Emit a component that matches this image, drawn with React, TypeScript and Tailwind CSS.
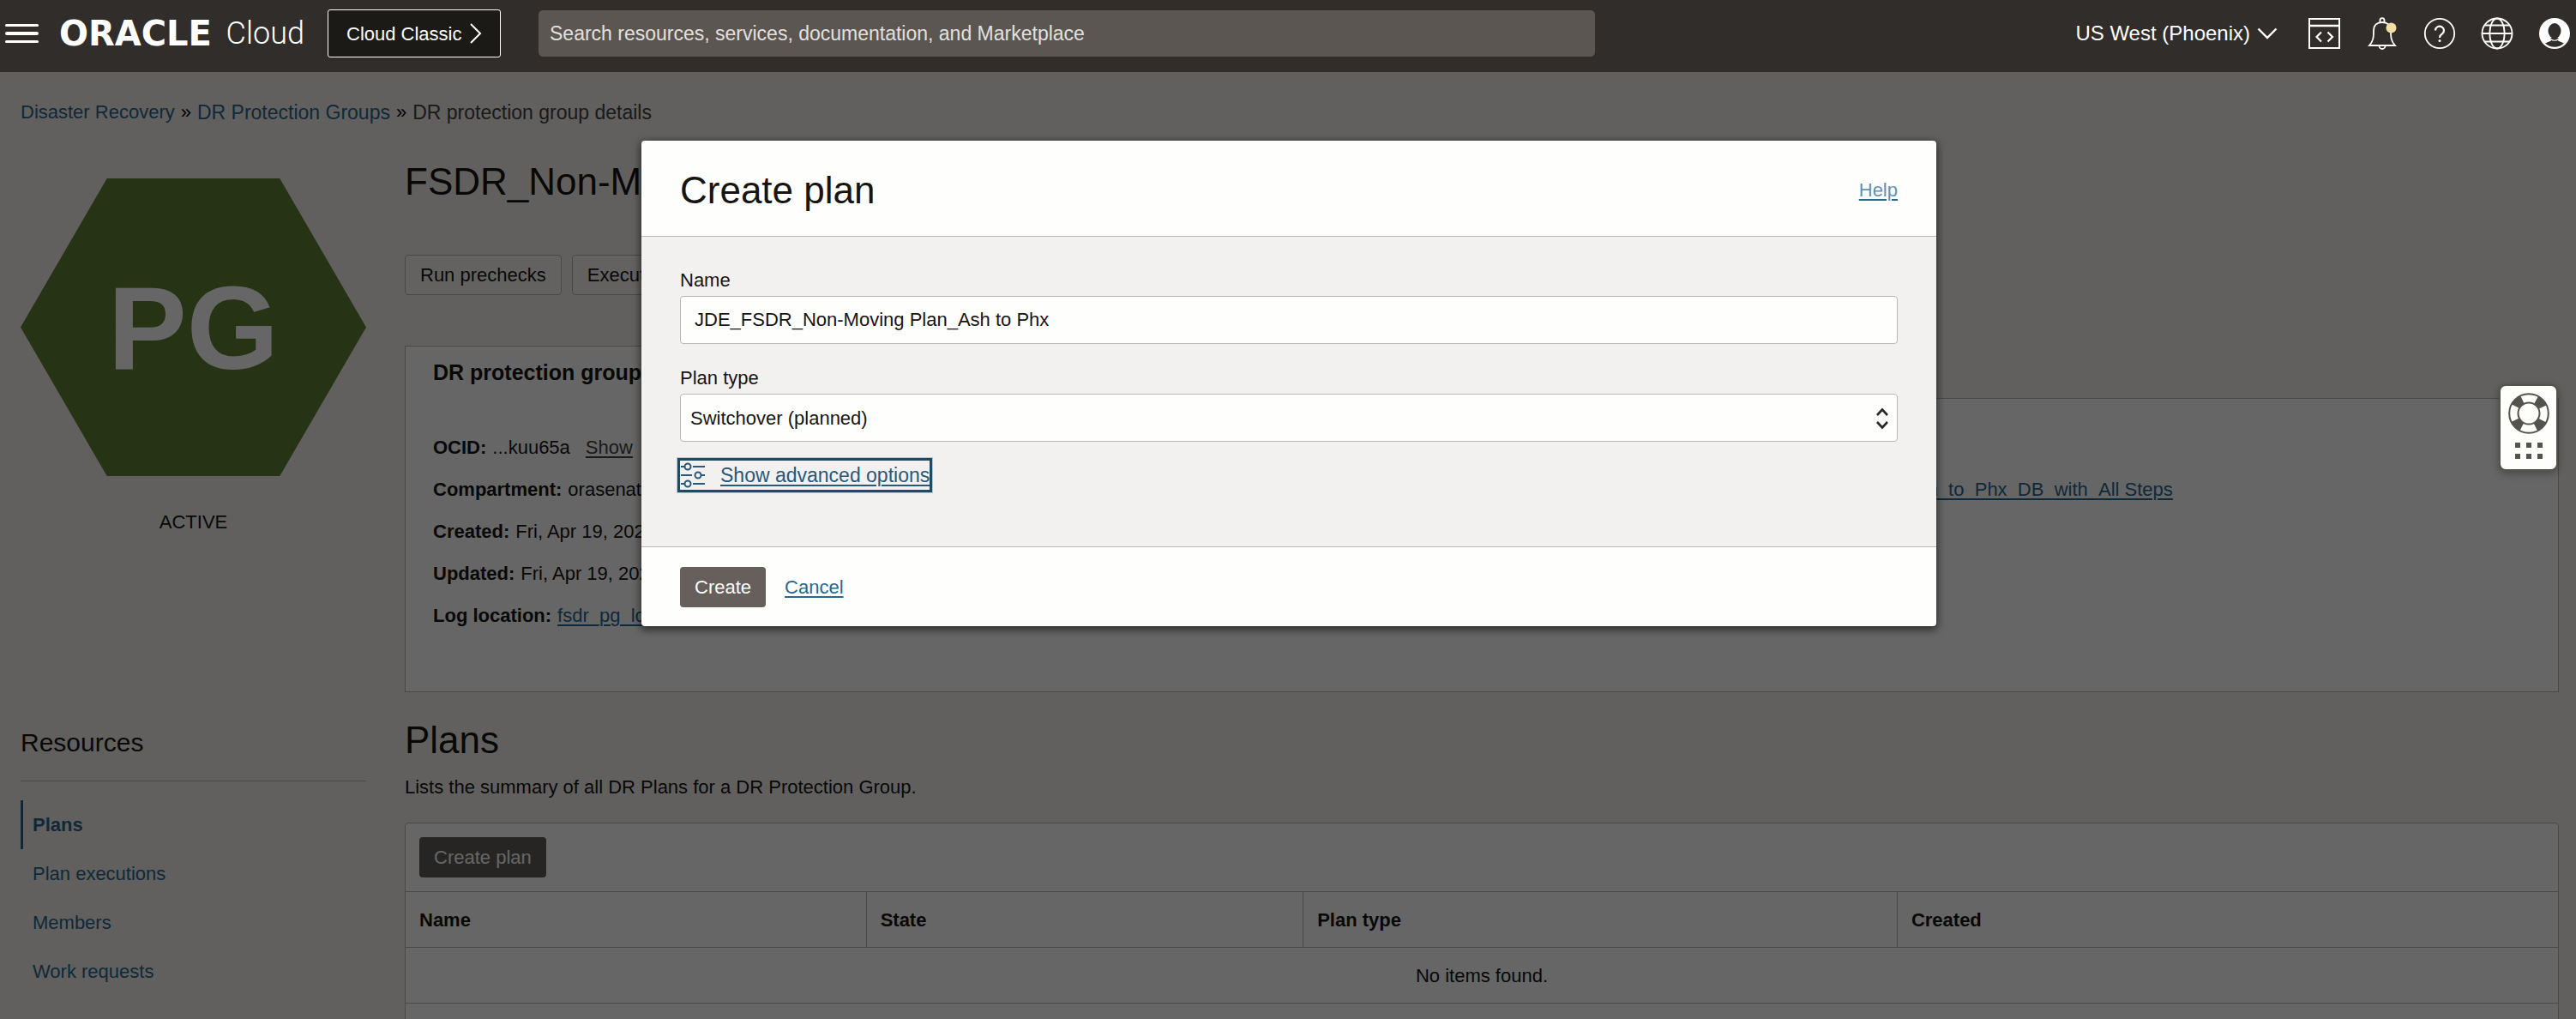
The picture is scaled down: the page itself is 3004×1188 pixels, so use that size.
import React, { useState } from "react";

const detailsLeft = [
  { label: "OCID:", value: "...kuu65a", action: "Show" },
  { label: "Compartment:", value: "orasenat" },
  { label: "Created:", value: "Fri, Apr 19, 2024" },
  { label: "Updated:", value: "Fri, Apr 19, 2024" },
];

const resources = ["Plans", "Plan executions", "Members", "Work requests"];

function CodeIcon() {
  return (
    <svg width="38" height="38" viewBox="0 0 38 38" fill="none" stroke="currentColor" strokeWidth="2">
      <rect x="1" y="2" width="35" height="34" />
      <path d="M1 10H36" strokeWidth="2.4" />
      <path d="M15 17.5L9.5 23L15 28.5M22.500 17.5L28 23L22.500 28.5" strokeWidth="2.2" />
    </svg>
  );
}

function BellIcon() {
  return (
    <svg width="38" height="38" viewBox="0 0 38 38" fill="none" stroke="currentColor" strokeWidth="1.8">
      <path d="M16.5 6V3.6a2.5 2.5 0 0 1 5 0V6" />
      <path d="M4 33H34C29.500 28 29 24 29 16C29 9 25 6 19 6S9 9 9 16C9 24 8.500 28 4 33Z" />
      <path d="M15.500 33.500a3.500 3.500 0 0 0 7 0" />
      <circle cx="29.500" cy="12.500" r="6" fill="#f3dfa6" stroke="none" />
    </svg>
  );
}

function HelpIcon() {
  return (
    <svg width="38" height="38" viewBox="0 0 38 38" fill="none" stroke="currentColor" strokeWidth="1.8">
      <circle cx="19" cy="19" r="17.200" />
      <path d="M14 15.500a5 4.800 0 1 1 8 3.800C20 20.700 19 21.500 19 24" strokeWidth="2.200" />
      <circle cx="19" cy="27.500" r="1.500" fill="currentColor" stroke="none" />
    </svg>
  );
}

function GlobeIcon() {
  return (
    <svg width="38" height="38" viewBox="0 0 38 38" fill="none" stroke="currentColor" strokeWidth="1.900">
      <circle cx="19" cy="19" r="17.500" />
      <ellipse cx="19" cy="19" rx="8.700" ry="17.500" />
      <path d="M1.500 19H36.500M5 9.500H33M5 28.500H33" />
    </svg>
  );
}

function UserIcon() {
  return (
    <svg width="38" height="38" viewBox="0 0 38 38">
      <circle cx="19" cy="19" r="18" fill="#fff" />
      <ellipse cx="19" cy="16" rx="7.500" ry="9" fill="#312d2a" />
      <path d="M14.500 24L15 27.500L8 30.500A16.500 16.500 0 0 0 30 30.500L23 27.500L23.500 24Z" fill="#312d2a" />
      <path d="M14.500 25.500Q19 29 23.500 25.500" stroke="#fff" strokeWidth="1.200" fill="none" />
    </svg>
  );
}

function SlidersIcon() {
  return (
    <svg width="30" height="30" viewBox="0 0 30 30" fill="none" stroke="currentColor" strokeWidth="2">
      <circle cx="9" cy="5" r="3.500" />
      <circle cx="21" cy="15" r="3.500" />
      <circle cx="9" cy="25" r="3.500" />
      <path d="M1 5H5.500M15 5H29M1 15H14M24.500 15H29M1 25H5.500M15 25H29" />
    </svg>
  );
}

function LifebuoyIcon() {
  return (
    <svg width="48" height="48" viewBox="0 0 48 48" fill="none" stroke="#55534e">
      <circle cx="24" cy="24" r="18" strokeWidth="10" strokeDasharray="11.310 16.964" strokeDashoffset="-8.482" />
      <circle cx="24" cy="24" r="22.800" strokeWidth="2" />
      <circle cx="24" cy="24" r="12.500" strokeWidth="2" />
    </svg>
  );
}

function Header() {
  return (
    <header className="relative z-20 flex h-[84px] items-center bg-[#312d2a] pb-[6px] text-[22px] text-white">
      <button aria-label="Open navigation menu" className="ml-1.5 flex w-[39px] flex-col gap-[6px]">
        <span className="h-[3px] rounded-sm bg-white" />
        <span className="h-[4px] rounded-sm bg-white" />
        <span className="h-[3px] rounded-sm bg-white" />
      </button>
      <a href="#home" className="ml-6 flex w-[286px] items-center justify-between leading-10">
        <span className="font-['DejaVu_Sans'] text-[40px] font-bold">ORACLE</span>
        <span className="font-['Roboto'] text-[36px] font-light">Cloud</span>
      </a>
      <button className="ml-[27px] flex h-[56px] w-[202px] items-center justify-between rounded-[3px] border border-white bg-[#1b1a16] px-[21px] whitespace-nowrap">
        Cloud Classic
        <svg width="14" height="24" viewBox="0 0 14 24" fill="none" stroke="currentColor" strokeWidth="2">
          <path d="M1 1L12 12L1 23" />
        </svg>
      </button>
      <input
        type="search"
        aria-label="Search"
        placeholder="Search resources, services, documentation, and Marketplace"
        className="ml-11 h-[54px] w-[41%] rounded-[5px] bg-[#5b5652] px-[13px] text-[23px] placeholder:text-[#e2e0de] placeholder:opacity-100"
      />
      <nav aria-label="Account" className="mr-1.5 ml-auto flex items-center gap-[29px]">
        <button className="mr-[7px] flex items-center gap-2 text-[24px] whitespace-nowrap">
          US West (Phoenix)
          <svg width="24" height="14" viewBox="0 0 24 14" fill="none" stroke="currentColor" strokeWidth="2.400">
            <path d="M1.500 1.500L12 12L22.500 1.500" />
          </svg>
        </button>
        <button aria-label="Developer tools"><CodeIcon /></button>
        <button aria-label="Announcements"><BellIcon /></button>
        <button aria-label="Help menu"><HelpIcon /></button>
        <button aria-label="Language"><GlobeIcon /></button>
        <button aria-label="Profile"><UserIcon /></button>
      </nav>
    </header>
  );
}

function Details() {
  return (
    <section className="flex gap-[45px]">
      <div className="flex w-[403px] shrink-0 flex-col items-center pt-[37px]">
        <div className="flex h-[347px] w-full items-center justify-center bg-[#5f8032] text-[138px] leading-none font-bold text-white [clip-path:polygon(25%_0,75%_0,100%_50%,75%_100%,25%_100%,0_50%)]">
          PG
        </div>
        <p className="mt-10 leading-7">ACTIVE</p>
      </div>
      <div className="min-w-0 flex-1">
        <h1 className="mt-[17px] text-[44px] leading-12">FSDR_Non-Moving</h1>
        <div className="mt-[61px] flex gap-3">
          {["Run prechecks", "Execute plan"].map((t) => (
            <button key={t} className="h-[47px] rounded-[4px] border border-[#b9b6b4] bg-[#f7f5f2] px-[17px] whitespace-nowrap">
              {t}
            </button>
          ))}
        </div>
        <div className="mt-[59px] flex">
          <button className="relative -mb-px h-[62px] border border-b-0 border-[#b9b6b4] bg-white px-8 text-[25px] font-bold">
            DR protection group information
          </button>
        </div>
        <dl className="grid h-[343px] grid-cols-2 border border-[#b9b6b4] bg-white pt-8 pr-[14px] pl-8">
          <div>
            {detailsLeft.map((d) => (
              <div key={d.label} className="flex h-[49px] items-center gap-[7px]">
                <dt className="font-bold">{d.label}</dt>
                <dd>
                  {d.value}
                  {d.action && (
                    <a href="#show" className="ml-[18px] text-[#45423f] underline decoration-2 underline-offset-3">
                      {d.action}
                    </a>
                  )}
                </dd>
              </div>
            ))}
            <div className="flex h-[49px] items-center gap-[7px]">
              <dt className="font-bold">Log location:</dt>
              <dd>
                <a href="#log" className="text-[#2a678c] underline decoration-2 underline-offset-3">fsdr_pg_log</a>
              </dd>
            </div>
          </div>
          <div>
            <div className="flex h-[49px] items-center gap-[7px]">
              <dt className="font-bold">Role:</dt>
              <dd>Standby</dd>
            </div>
            <div className="flex h-[49px] items-center gap-[7px]">
              <dt className="font-bold">Peer DR protection group:</dt>
              <dd>
                <a href="#peer" className="text-[#2a678c] underline decoration-2 underline-offset-3">
                  FSDR_Non-Moving_Ash_to_Phx_DB_with_All Steps
                </a>
              </dd>
            </div>
          </div>
        </dl>
      </div>
    </section>
  );
}

function Plans() {
  return (
    <section className="flex gap-[45px]">
      <aside className="w-[403px] shrink-0 pt-[39px]">
        <h2 className="border-b border-[#b9b6b4] pb-6 text-[30px] leading-10 text-[#161513]">Resources</h2>
        <ul className="mt-[22px]">
          {resources.map((r, i) => (
            <li key={r}>
              <a
                href="#resource"
                className={
                  i === 0
                    ? "flex h-[57px] items-center border-l-3 border-[#2a678c] pl-[11px] font-bold text-[#2a678c]"
                    : "flex h-[57px] items-center pl-[14px] text-[#2a678c]"
                }
              >
                {r}
              </a>
            </li>
          ))}
        </ul>
      </aside>
      <div className="min-w-0 flex-1 pt-8">
        <h2 className="text-[44px] leading-12">Plans</h2>
        <p className="mt-[17px] leading-7">Lists the summary of all DR Plans for a DR Protection Group.</p>
        <div className="mt-[27px] h-[300px] rounded-[4px] border border-[#b9b6b4] bg-white">
          <div className="px-4 py-4">
            <button className="h-[47px] rounded-[4px] bg-[#605c58] px-[17px] text-white">Create plan</button>
          </div>
          <table className="w-full table-fixed text-left">
            <colgroup>
              <col className="w-[21.4%]" />
              <col className="w-[20.3%]" />
              <col className="w-[27.6%]" />
              <col />
            </colgroup>
            <thead>
              <tr className="h-[65px] border-y border-[#b9b6b4]">
                <th className="px-4">Name</th>
                <th className="border-l border-[#b9b6b4] px-4">State</th>
                <th className="border-l border-[#b9b6b4] px-4">Plan type</th>
                <th className="border-l border-[#b9b6b4] px-4">Created</th>
              </tr>
            </thead>
            <tbody>
              <tr className="h-[65px] border-b border-[#b9b6b4]">
                <td colSpan={4} className="text-center">No items found.</td>
              </tr>
            </tbody>
          </table>
        </div>
      </div>
    </section>
  );
}

function CreatePlanDialog() {
  const [name, setName] = useState("JDE_FSDR_Non-Moving Plan_Ash to Phx");
  return (
    <div
      role="dialog"
      aria-modal="true"
      aria-labelledby="dialog-title"
      className="w-[50.3%] overflow-hidden rounded-[4px] bg-[#fefefd] text-[#161513] shadow-[0_3px_8px_2px_rgba(0,0,0,0.5)]"
    >
      <div className="flex h-[112px] items-center justify-between border-b border-[#bab7b5] px-[45px] pt-1">
        <h2 id="dialog-title" className="text-[44px] leading-12">Create plan</h2>
        <a href="#help" className="text-[#5f93b3] underline decoration-[#2a678c] decoration-2 underline-offset-3">Help</a>
      </div>
      <form className="flex h-[361px] flex-col items-start bg-[#f3f1f0] px-[45px] pt-[37px]">
        <label htmlFor="plan-name" className="leading-7">Name</label>
        <input
          id="plan-name"
          value={name}
          onChange={(e) => setName(e.target.value)}
          className="mt-1 h-[56px] w-full rounded-[4px] border border-[#bab7b5] bg-[#fefefd] px-4"
        />
        <label htmlFor="plan-type" className="mt-[26px] leading-7">Plan type</label>
        <div className="relative mt-1 w-full">
          <select
            id="plan-type"
            className="block h-[56px] w-full appearance-none rounded-[4px] border border-[#bab7b5] bg-[#fefefd] px-[11px]"
          >
            <option>Switchover (planned)</option>
            <option>Failover (unplanned)</option>
          </select>
          <svg
            className="pointer-events-none absolute top-4 right-[10px]"
            width="16"
            height="26"
            viewBox="0 0 16 26"
            fill="none"
            stroke="#2a2826"
            strokeWidth="2.600"
          >
            <path d="M2 9L8 2.500L14 9M2 17L8 23.500L14 17" />
          </svg>
        </div>
        <button
          type="button"
          className="mt-[19px] -ml-[3px] flex h-10 items-center gap-[17px] border-3 border-[#1f4a63] text-[23px] text-[#28597a] ring-1 ring-[#b7c5cd]"
        >
          <SlidersIcon />
          <span className="whitespace-nowrap underline decoration-2 underline-offset-3">Show advanced options</span>
        </button>
      </form>
      <div className="flex h-[93px] items-center gap-[22px] border-t border-[#bab7b5] px-[45px]">
        <button className="h-[47px] rounded-[4px] bg-[#665f5b] px-[17px] text-white">Create</button>
        <a href="#cancel" className="text-[#2a678c] underline decoration-2 underline-offset-3">Cancel</a>
      </div>
    </div>
  );
}

export default function App() {
  return (
    <div className="relative h-screen overflow-hidden bg-[#f2f0ed] font-['Liberation_Sans',Arial,sans-serif] text-[22px] text-[#161513]">
      <Header />
      <main className="pr-5 pl-6">
        <nav aria-label="Breadcrumb" className="flex items-center gap-[7px] pt-[33px] leading-7">
          <a href="#dr" className="text-[#2a678c]">Disaster Recovery</a>
          <span className="text-black">»</span>
          <a href="#groups" className="text-[23px] text-[#2a678c]">DR Protection Groups</a>
          <span className="text-black">»</span>
          <span className="text-[23px] text-[#45423f]">DR protection group details</span>
        </nav>
        <div className="pt-[26px]">
          <Details />
          <Plans />
        </div>
      </main>
      <div className="absolute inset-0 z-10 flex items-start justify-center bg-black/60 pt-[164px] pl-0.5">
        <CreatePlanDialog />
      </div>
      <button
        aria-label="Support"
        className="absolute top-[448px] right-[21px] z-20 flex h-[101px] w-[69px] flex-col items-center gap-[10px] rounded-[8px] border-2 border-[#55534e] bg-[#fefefd] pt-[8px] shadow-[0_3px_10px_rgba(0,0,0,0.3)]"
      >
        <LifebuoyIcon />
        <span className="grid grid-cols-3 gap-[7px]">
          {[0, 1, 2, 3, 4, 5].map((i) => (
            <span key={i} className="size-[6px] bg-[#55534e]" />
          ))}
        </span>
      </button>
    </div>
  );
}
